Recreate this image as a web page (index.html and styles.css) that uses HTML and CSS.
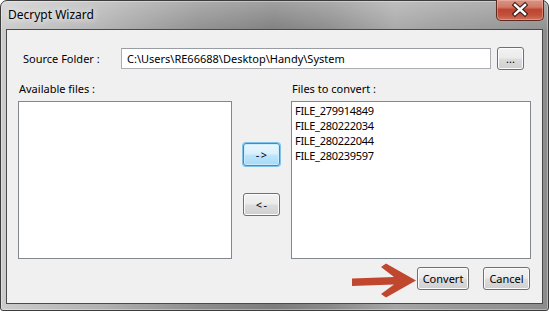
FILE: index.html
```html
<!DOCTYPE html>
<html>
<head>
<meta charset="utf-8">
<link rel="stylesheet" href="styles.css">
</head>
<body>
<div class="window">
  <div class="titlebar">
    <span class="title">Decrypt Wizard</span>
    <div class="close">
      <svg width="48" height="21" viewBox="0 0 48 21">
        <path d="M19 6 L29 15 M29 6 L19 15" stroke="#3b1a14" stroke-width="4.6" stroke-linecap="square" fill="none"/>
        <path d="M19 6 L29 15 M29 6 L19 15" stroke="#ffffff" stroke-width="2.4" stroke-linecap="square" fill="none"/>
      </svg>
    </div>
  </div>
  <div class="client">
    <div class="source-row">
      <span class="src-label">Source Folder :</span>
      <div class="input">C:\Users\RE66688\Desktop\Handy\System</div>
      <button class="btn browse">...</button>
    </div>
    <div class="lists">
      <div class="col left">
        <div class="col-label">Available files :</div>
        <div class="listbox"></div>
      </div>
      <div class="mid">
        <button class="btn move hot">-&gt;</button>
        <button class="btn move second">&lt;-</button>
      </div>
      <div class="col right">
        <div class="col-label">Files to convert :</div>
        <div class="listbox">
          <div class="item">FILE_279914849</div>
          <div class="item">FILE_280222034</div>
          <div class="item">FILE_280222044</div>
          <div class="item">FILE_280239597</div>
        </div>
      </div>
    </div>
    <div class="actions">
      <svg class="pointer" width="70" height="38" viewBox="0 0 70 38">
        <path d="M2 16.5 L44 15 L31 5 L36 1.5 L66 18.5 L36 35.5 L31 32 L44 22.5 L2 24 Z" fill="#c1462e"/>
      </svg>
      <button class="btn convert">Convert</button>
      <button class="btn cancel">Cancel</button>
    </div>
  </div>
</div>
</body>
</html>
```

FILE: styles.css
```css
* { box-sizing: border-box; }

body {
  margin: 0;
  background: #ffffff;
  font-family: "Noto Sans", "Open Sans", sans-serif;
  font-size: 11px;
  color: #000;
}

.window {
  width: 549px;
  height: 311px;
  border: 1px solid #3c3c3c;
  border-radius: 7px 7px 3px 3px;
  padding: 0 5px 6px 5px;
  display: flex;
  flex-direction: column;
  background:
    linear-gradient(180deg, rgba(255,255,255,0.28) 0px, rgba(255,255,255,0.05) 28px, rgba(0,0,0,0) 29px),
    linear-gradient(90deg, #cbcbcb 0%, #b2b2b2 18%, #8d8d8d 36%, #7c7c7c 50%, #8a8a8a 60%, #a6a6a6 72%, #9a9a9a 82%, #8c8c8c 100%);
  box-shadow: inset 0 0 0 1px rgba(255,255,255,0.35);
}

.titlebar {
  height: 28px;
  display: flex;
  justify-content: space-between;
  align-items: flex-start;
}

.title {
  font-family: "Noto Sans", "Open Sans", sans-serif;
  font-size: 12px;
  line-height: 16px;
  margin-top: 6px;
  padding-left: 2px;
  color: #000;
  text-shadow: 0 0 6px rgba(255,255,255,0.9), 0 0 10px rgba(255,255,255,0.7);
}

.close {
  width: 48px;
  height: 21px;
  margin-top: -1px;
  margin-right: -1px;
  border: 1px solid #5e2a20;
  border-top: none;
  border-radius: 0 0 5px 5px;
  background: linear-gradient(180deg, #d99484 0%, #d27a66 35%, #bd4430 48%, #c2523c 75%, #cf725b 100%);
  box-shadow: inset 0 0 0 1px rgba(255,200,190,0.4);
  overflow: hidden;
}

.close svg { display: block; margin: -1px 0 0 -1px; }

.client {
  height: 275px;
  border: 1px solid #4a4a4a;
  background: #f0f0f0;
  padding: 17px 11px 13px 11px;
  display: flex;
  flex-direction: column;
}

.source-row {
  display: flex;
  align-items: center;
  height: 23px;
}

.src-label {
  width: 103px;
  padding-left: 5px;
}

.input {
  width: 370px;
  height: 21px;
  border: 1px solid #abadb3;
  border-top-color: #9a9ca3;
  background: #fff;
  padding: 0 5px;
  line-height: 19px;
  white-space: nowrap;
}

.btn {
  font-family: "Noto Sans", "Open Sans", sans-serif;
  font-size: 11px;
  color: #000;
  height: 23px;
  padding: 0;
  border: 1px solid #707070;
  border-radius: 3px;
  background: linear-gradient(180deg, #f2f2f2 0%, #ebebeb 48%, #dddddd 52%, #cfcfcf 100%);
  box-shadow: inset 0 0 0 1px #fcfcfc;
  line-height: 20px;
}

.browse {
  width: 27px;
  margin-left: 6px;
}

.lists {
  display: flex;
  margin-top: 12px;
}

.col.left { width: 214px; }
.col.right { width: 240px; }

.col-label {
  height: 19px;
  line-height: 14px;
  padding-left: 1px;
}

.listbox {
  height: 158px;
  border: 1px solid #828790;
  background: #fff;
  padding: 1px 3px;
}

.item {
  line-height: 15px;
  white-space: nowrap;
  letter-spacing: -0.3px;
}

.mid {
  width: 59px;
  display: flex;
  flex-direction: column;
  align-items: center;
  padding-top: 61px;
}

.move {
  width: 37px;
  letter-spacing: 1.5px;
  text-indent: 1.5px;
}
.move.second { margin-top: 27px; }

.btn.hot {
  border-color: #3c8cc6;
  background: linear-gradient(180deg, #eaf6fd 0%, #d9f0fc 48%, #bee6fd 52%, #a7d9f5 100%);
  box-shadow: inset 0 0 0 1px #cdebfb, 0 0 0 1px #7fc3ea;
}

.actions {
  position: relative;
  margin-top: 8px;
  display: flex;
  justify-content: flex-end;
  gap: 14px;
  padding-right: 1px;
}

.convert { width: 52px; }
.cancel { width: 47px; }

.pointer {
  position: absolute;
  left: 332px;
  top: -5px;
}
```
